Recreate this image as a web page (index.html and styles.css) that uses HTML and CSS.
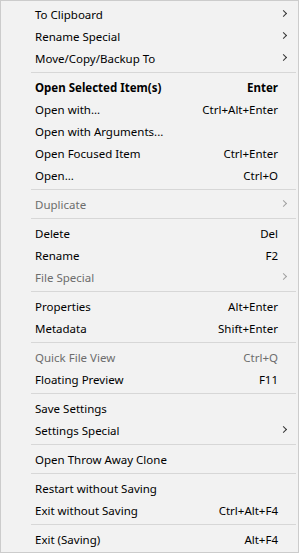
FILE: index.html
```html
<!DOCTYPE html>
<html>
<head>
<meta charset="utf-8">
<link rel="stylesheet" href="styles.css">
</head>
<body>
<div class="menu">
  <div class="item"><span class="label">To Clipboard</span><span class="arrow"></span></div>
  <div class="item"><span class="label">Rename Special</span><span class="arrow"></span></div>
  <div class="item"><span class="label">Move/Copy/Backup To</span><span class="arrow"></span></div>
  <div class="sep"></div>
  <div class="item bold"><span class="label">Open Selected Item(s)</span><span class="key">Enter</span></div>
  <div class="item"><span class="label">Open with...</span><span class="key">Ctrl+Alt+Enter</span></div>
  <div class="item"><span class="label">Open with Arguments...</span></div>
  <div class="item"><span class="label">Open Focused Item</span><span class="key">Ctrl+Enter</span></div>
  <div class="item"><span class="label">Open...</span><span class="key">Ctrl+O</span></div>
  <div class="sep"></div>
  <div class="item disabled"><span class="label">Duplicate</span><span class="arrow"></span></div>
  <div class="sep"></div>
  <div class="item"><span class="label">Delete</span><span class="key">Del</span></div>
  <div class="item"><span class="label">Rename</span><span class="key">F2</span></div>
  <div class="item disabled"><span class="label">File Special</span><span class="arrow"></span></div>
  <div class="sep"></div>
  <div class="item"><span class="label">Properties</span><span class="key">Alt+Enter</span></div>
  <div class="item"><span class="label">Metadata</span><span class="key">Shift+Enter</span></div>
  <div class="sep"></div>
  <div class="item disabled"><span class="label">Quick File View</span><span class="key">Ctrl+Q</span></div>
  <div class="item"><span class="label">Floating Preview</span><span class="key">F11</span></div>
  <div class="sep"></div>
  <div class="item"><span class="label">Save Settings</span></div>
  <div class="item"><span class="label">Settings Special</span><span class="arrow"></span></div>
  <div class="sep"></div>
  <div class="item"><span class="label">Open Throw Away Clone</span></div>
  <div class="sep"></div>
  <div class="item"><span class="label">Restart without Saving</span></div>
  <div class="item"><span class="label">Exit without Saving</span><span class="key">Ctrl+Alt+F4</span></div>
  <div class="sep"></div>
  <div class="item"><span class="label">Exit (Saving)</span><span class="key">Alt+F4</span></div>
</div>
</body>
</html>
```
FILE: styles.css
```css
html, body {
  margin: 0;
  padding: 0;
  background: #f2f2f2;
}
.menu {
  box-sizing: border-box;
  width: 299px;
  height: 553px;
  border: 1px solid #cccccc;
  background: #f2f2f2;
  padding: 2px 2px;
  font-family: "Noto Sans", "Open Sans", sans-serif;
  font-size: 11.5px;
  color: #000;
  display: flex;
  flex-direction: column;
}
.item {
  height: 22px;
  display: flex;
  align-items: center;
  padding-left: 32px;
  padding-right: 18px;
  position: relative;
  white-space: nowrap;
}
.label {
  flex: 1;
}
.key {
  text-align: right;
}
.bold {
  font-weight: bold;
}
.disabled {
  color: #6d6d6d;
}
.arrow {
  position: absolute;
  right: 10px;
  top: 8px;
  width: 4px;
  height: 4px;
  border-top: 1px solid #333;
  border-right: 1px solid #333;
  transform: rotate(45deg);
}
.disabled .arrow {
  border-color: #a0a0a0;
}
.sep {
  height: 7px;
  display: flex;
  align-items: center;
  padding-left: 28px;
}
.sep::before {
  content: "";
  display: block;
  flex: 1;
  height: 1px;
  background: #d7d7d7;
}
```
